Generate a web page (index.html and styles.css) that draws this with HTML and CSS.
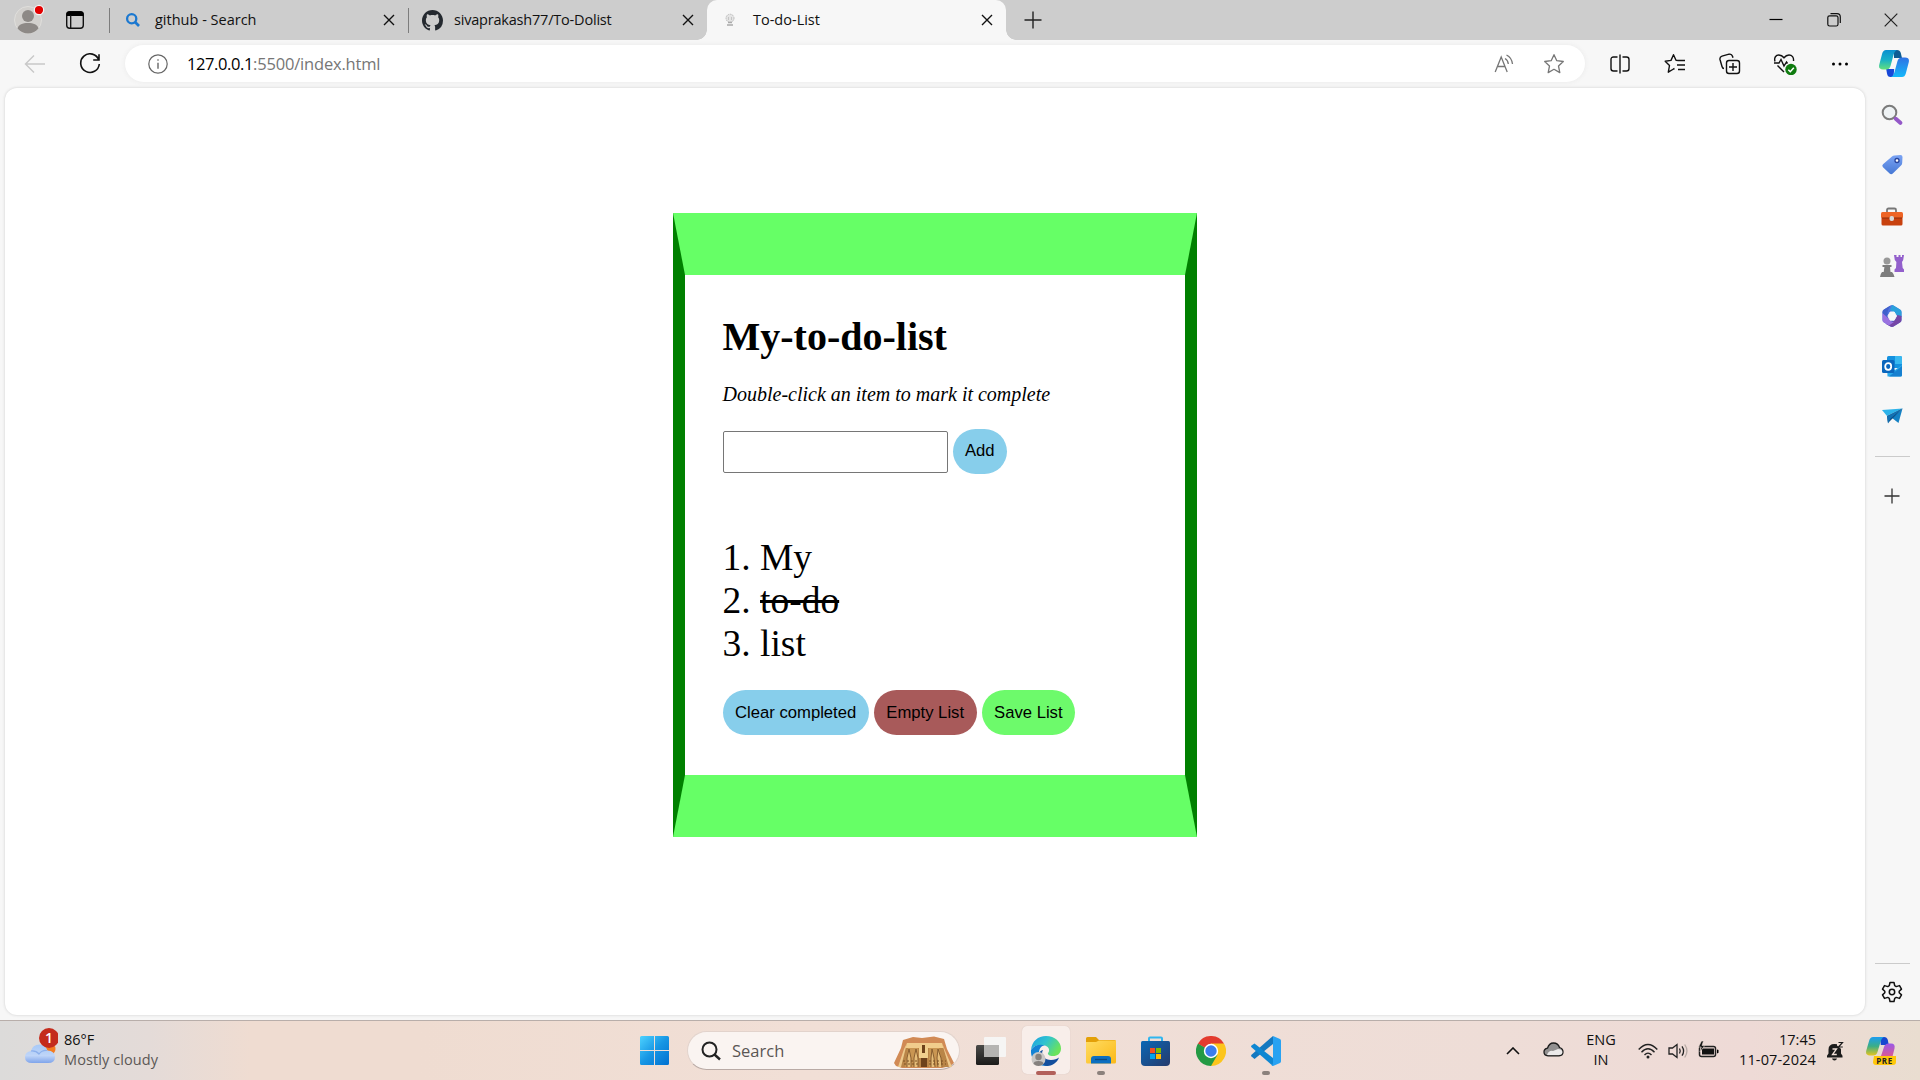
FILE: index.html
```html
<!DOCTYPE html>
<html lang="en">
<head>
<meta charset="utf-8">
<title>To-do-List</title>
<link rel="stylesheet" href="styles.css">
</head>
<body>
<header class="tabstrip">
  <div class="profile"><svg width="34" height="34" viewBox="0 0 34 34"><circle cx="17" cy="17" r="13.5" fill="#d2d0cd" stroke="#e0dfdc"/><circle cx="17" cy="13" r="6" fill="#8d8986"/><path d="M6.5 25.5c1-4 5-5.500 10.500-5.500s9.500 1.500 10.500 5.500c-3 3.500-6.500 5-10.500 5s-7.500-1.500-10.500-5z" fill="#8d8986"/><circle cx="28" cy="7" r="4.700" fill="#e30000" stroke="#f3f3f3" stroke-width="1.200"/></svg></div>
  <div class="workspaces"><svg width="20" height="20" viewBox="0 0 20 20"><rect x="1.700" y="1.700" width="16.600" height="16.600" rx="3" fill="none" stroke="#111" stroke-width="1.400"/><path d="M1.500 6V4q0-2.500 2.500-2.500h12q2.500 0 2.500 2.500v2z" fill="#000"/><path d="M5.700 5v13" stroke="#111" stroke-width="1.300"/></svg></div>
  <div class="tab tab-first">
    <span class="favicon"><svg width="16" height="16" viewBox="0 0 16 16" fill="none" stroke="#1b78d0" stroke-width="2.300"><circle cx="6.700" cy="6.700" r="4.600"/><path d="M10 10l4 4" stroke-width="2.600"/></svg></span>
    <span class="title">github - Search</span>
    <svg class="close" width="12" height="12" viewBox="0 0 12 12"><path d="M1 1l10 10M11 1L1 11" stroke="#111" stroke-width="1.400"/></svg>
  </div>
  <div class="tab tab-second">
    <span class="favicon"><svg width="21" height="21" viewBox="0 0 16 16"><path fill="#24292f" d="M8 0C3.580 0 0 3.580 0 8c0 3.540 2.290 6.530 5.470 7.590.4.070.55-.17.55-.38 0-.19-.01-.82-.01-1.490-2.010.37-2.530-.49-2.690-.94-.09-.23-.48-.94-.82-1.130-.28-.15-.68-.52-.01-.53.63-.01 1.080.58 1.230.82.72 1.210 1.870.87 2.330.66.070-.52.28-.87.51-1.070-1.780-.2-3.640-.89-3.640-3.950 0-.87.31-1.590.82-2.150-.08-.2-.36-1.020.080-2.120 0 0 .67-.21 2.200.82.64-.18 1.320-.27 2-.27s1.360.090 2 .27c1.530-1.040 2.200-.82 2.200-.82.44 1.100.16 1.920.080 2.120.51.56.82 1.270.82 2.150 0 3.070-1.870 3.750-3.650 3.950.29.25.54.73.54 1.480 0 1.070-.01 1.930-.01 2.200 0 .21.15.46.55.38A8.010 8.010 0 0016 8c0-4.420-3.580-8-8-8z"/></svg></span>
    <span class="title">sivaprakash77/To-Dolist</span>
    <svg class="close" width="12" height="12" viewBox="0 0 12 12"><path d="M1 1l10 10M11 1L1 11" stroke="#111" stroke-width="1.400"/></svg>
  </div>
  <div class="tab tab-active">
    <span class="favicon"><svg width="12" height="14" viewBox="0 0 12 14"><circle cx="6" cy="5.200" r="4" fill="#e4e4e4" stroke="#bdbdbd" stroke-dasharray="1.500 .8"/><path d="M4 9.500h4M3 12h6" stroke="#aaa" stroke-width="1.300"/><path d="M4.500 4v3M7.500 4v3" stroke="#c4c4c4"/></svg></span>
    <span class="title">To-do-List</span>
    <svg class="close" width="12" height="12" viewBox="0 0 12 12"><path d="M1 1l10 10M11 1L1 11" stroke="#111" stroke-width="1.400"/></svg>
  </div>
  <div class="newtab"><svg width="18" height="18" viewBox="0 0 18 18"><path d="M9 .5v17M.5 9h17" stroke="#222" stroke-width="1.400"/></svg></div>
  <div class="winctl">
    <span><svg width="14" height="14" viewBox="0 0 14 14"><path d="M.5 6.500h13" stroke="#000" stroke-width="1.200"/></svg></span>
    <span><svg width="14" height="14" viewBox="0 0 14 14" fill="none" stroke="#111" stroke-width="1.200"><rect x=".8" y="2.800" width="10.200" height="10.200" rx="1.800"/><path d="M3.500 .7h6.500q3.300 0 3.300 3.300v6"/></svg></span>
    <span><svg width="14" height="14" viewBox="0 0 14 14"><path d="M.7 .7l12.600 12.600M13.300 .7L.7 13.300" stroke="#222" stroke-width="1.200"/></svg></span>
  </div>
</header>

<nav class="toolbar">
  <span class="tool"><svg width="22" height="20" viewBox="0 0 22 20" fill="none" stroke="#c9c9c9" stroke-width="1.500"><path d="M21 10H2M10 1.500L1.500 10l8.500 8.500"/></svg></span>
  <span class="tool"><svg width="22" height="22" viewBox="0 0 22 22" fill="none" stroke="#111" stroke-width="1.600"><path d="M19.800 7A9.300 9.300 0 1 0 20.300 11M20 1.200V7h-5.800"/></svg></span>
  <div class="address">
    <span class="info"><svg width="20" height="20" viewBox="0 0 20 20" fill="none" stroke="#666" stroke-width="1.200"><circle cx="10" cy="10" r="9.200"/><path d="M10 8.700v6" stroke-width="1.400"/><circle cx="10" cy="6" r=".5" stroke-width=".8"/></svg></span>
    <span class="url"><b>127.0.0.1</b>:5500/index.html</span>
    <span class="addr-icon"><svg width="20" height="20" viewBox="0 0 20 20" fill="none" stroke="#767676" stroke-width="1.300"><path d="M1.200 18L7.200 3l6 15M3.300 12.500h7.800M11 4.500q3 1.700 3.300 5.500M12.500 1q5.200 2.500 6 9"/></svg></span>
    <span class="addr-icon"><svg width="22" height="22" viewBox="0 0 22 22" fill="none" stroke="#767676" stroke-width="1.300" stroke-linejoin="round"><path d="M11 1.700l2.800 6 6.500.8-4.800 4.500 1.300 6.600-5.800-3.300-5.800 3.300 1.300-6.600L1.700 8.500l6.500-.8z"/></svg></span>
  </div>
  <div class="actions">
    <span class="tool"><svg width="20" height="20" viewBox="0 0 20 20" fill="none" stroke="#111" stroke-width="1.400"><path d="M7.500 3H3.500Q1 3 1 5.500v9Q1 17 3.500 17h4M12.500 3h4Q19 3 19 5.500v9q0 2.500-2.500 2.500h-4M10 .5v19"/></svg></span>
    <span class="tool"><svg width="22" height="22" viewBox="0 0 22 22" fill="none" stroke="#111" stroke-width="1.400" stroke-linejoin="round"><path d="M14.500 7.500l-2.500-.3-2.500-5.500-2.500 5.700-5.800.8 4.300 4.300-1.200 6.700L9.500 16l1-.5M14 7.500h7M13 12h8M14 16.500h7"/></svg></span>
    <span class="tool"><svg width="22" height="22" viewBox="0 0 22 22" fill="none" stroke="#111" stroke-width="1.400"><rect x="7.500" y="7.500" width="13" height="13" rx="2.500"/><path d="M14 10v8M10 14h8M5 15.500q-1.500 0-2-2L1 6.500Q.5 4 3 3.200l7-2q2.700-.6 3.500 2l.5 1.600"/></svg></span>
    <span class="tool"><svg width="24" height="22" viewBox="0 0 24 22" fill="none" stroke="#111" stroke-width="1.400"><path d="M2 8.500C.8 4.500 3 2 5.800 2 8.500 2 10 3.500 11 4.800 12 3.500 13.500 2 16 2c3 0 5 2.500 4.500 6M1 10h5l2-3.500 3 6.500 2.500-4 1 1.500M4.500 12.500L11 19"/><circle cx="18" cy="16.500" r="5.700" fill="#0f7b0f" stroke="none"/><path d="M15.300 16.700l2 2 3.500-4" stroke="#fff" stroke-width="1.500"/></svg></span>
    <span class="tool"><svg width="18" height="6" viewBox="0 0 18 6"><circle cx="2.500" cy="3" r="1.500"/><circle cx="9" cy="3" r="1.500"/><circle cx="15.500" cy="3" r="1.500"/></svg></span>
    <span class="tool"><svg width="30" height="27" viewBox="0 0 30 27">
      <defs><linearGradient id="cpA" x1="0" y1="0" x2="0" y2="1"><stop offset="0" stop-color="#0a8fd0"/><stop offset=".5" stop-color="#18b0c8"/><stop offset="1" stop-color="#62e07c"/></linearGradient><linearGradient id="cpB" x1="0" y1="0" x2="0" y2="1"><stop offset="0" stop-color="#2f72e4"/><stop offset="1" stop-color="#14b8fa"/></linearGradient></defs>
      <path d="M15 0h3q3 0 3.800 3l1.200 5h-8z" fill="#0d5c94"/><path d="M14.500 27h-3q-3 0-3.500-3.500l-.8-4.500h8z" fill="#1747d8"/>
      <path d="M7 0h11q-2.500 1-3.500 5l-3 11q-1 3.500-4.500 3.500H4q-5 0-3.700-5L3.200 3.500Q4.200 0 7 0z" fill="url(#cpA)"/><path d="M23 27H12q2.500-1 3.500-5l3-11q1-3.500 4.500-3.500h3q5 0 3.700 5l-2.900 11Q25.800 27 23 27z" fill="url(#cpB)"/></svg></span>
  </div>
</nav>

<div class="main">
  <main class="page">
    <section class="card">
      <h1>My-to-do-list</h1>
      <p class="hint"><i>Double-click an item to mark it complete</i></p>
      <div class="entry"><input type="text" class="field"><button class="btn blue">Add</button></div>
      <ol class="items"><li>My</li><li class="done">to-do</li><li>list</li></ol>
      <div class="buttons"><button class="btn blue">Clear completed</button><button class="btn red">Empty List</button><button class="btn green">Save List</button></div>
    </section>
  </main>
  <aside class="sidebar">
    <span class="side"><svg width="22" height="22" viewBox="0 0 22 22" fill="none"><circle cx="8.500" cy="8.500" r="6.800" fill="#eef2f4" stroke="#7b7b7b" stroke-width="2"/><path d="M14.800 14.800l4.500 4" stroke="#9458c8" stroke-width="4" stroke-linecap="round"/></svg></span>
    <span class="side"><svg width="22" height="22" viewBox="0 0 22 22"><defs><linearGradient id="tag" x1="0" y1="0" x2="0" y2="1"><stop offset="0" stop-color="#7ba4f4"/><stop offset="1" stop-color="#4577d4"/></linearGradient></defs><path d="M11 2.500Q12 1.500 13.500 1.400L19.500 1q2 0 2 2l-.3 6q-.1 1.500-1.200 2.600l-8.200 8q-1.600 1.500-3.200 0L2 13.200q-1.500-1.500 0-3z" fill="url(#tag)"/><circle cx="16" cy="6.500" r="2" fill="#fff" stroke="#27449c" stroke-width="1.300"/></svg></span>
    <span class="side side-tools"><svg width="24" height="20" viewBox="0 0 24 20"><path d="M7 6V3q0-1.500 1.500-1.500h6Q16 1.500 16 3v3" fill="none" stroke="#777" stroke-width="1.800"/><rect x="1.500" y="9" width="21" height="9.500" rx="1.500" fill="#c8410e"/><rect x="1" y="5" width="22" height="6" rx="1.500" fill="#ee6425"/><path d="M2 11h20" stroke="#8f2d0a"/><rect x="9.500" y="9" width="4.500" height="5" rx="2" fill="#d8d8d8"/></svg></span>
    <span class="side"><svg width="24" height="24" viewBox="0 0 24 24"><path d="M14 1h2.500v2h2V1h2v2h1.500V1H24l-.8 5-1.200 2 .7 6 1.300 1.500V18h-9.500v-2.500L16 14l.4-6-1.600-2z" fill="#9360cc"/><circle cx="7" cy="7" r="3.500" fill="#999"/><path d="M2.500 11h9v2H10l.5 5h1.500q2 2 2.500 5H0q.3-3 2-5h1.700l.7-5H2.500z" fill="#7d7d7d"/></svg></span>
    <span class="side"><svg width="22" height="24" viewBox="0 0 22 24"><path d="M9.500 1.500q1.500-.8 3 0l6.500 3.900q1.500.8 1.500 2.600v8q0 1.800-1.500 2.600l-6.500 3.900q-1.500.8-3 0L3 18.600Q1.500 17.800 1.500 16V8Q1.500 6.200 3 5.400z" fill="#4f74de"/><path d="M11 1q.8 0 1.500.5l6.500 3.900q1.500.8 1.500 2.600v5L15 10.500 9 6z" fill="#2ba0dc"/><path d="M20.500 12v4q0 1.800-1.500 2.600l-6.500 3.900q-1.500.8-3 0L5 20l8-3 3.500-6z" fill="#7546a6"/><path d="M1.500 16V9L7 13l4 5 2 0-5 3.600-5-3Q1.500 17.800 1.500 16z" fill="#9a72e0"/><path d="M3 5.400l6.500-3.900Q7 5 6.500 8.500L7 14 1.500 9V8Q1.500 6.200 3 5.400z" fill="#4060cc"/><path d="M9.200 8h4l2.300 4-2.300 4.200h-4L6.900 12z" fill="#f7f7f7" stroke="#f7f7f7" stroke-linejoin="round"/></svg></span>
    <span class="side"><svg width="22" height="22" viewBox="0 0 22 22"><rect x="6" y="1" width="15" height="12" rx="1.500" fill="#1491df"/><path d="M14 1h5.500Q21 1 21 2.500V9h-7z" fill="#38b8f0"/><path d="M6 10l8 5 7-5v10q0 1.500-1.500 1.500h-13z" fill="#29a9ea"/><path d="M21 11v9q0 1.500-1.500 1.500H8z" fill="#1680d0"/><rect x="1" y="5" width="12.500" height="13" rx="1.500" fill="#0a66bd"/><ellipse cx="7.200" cy="11.500" rx="3" ry="3.300" fill="none" stroke="#fff" stroke-width="1.800"/></svg></span>
    <span class="side"><svg width="22" height="20" viewBox="0 0 22 20"><path d="M1 4l20.500-1.500L6 10z" fill="#2db3ea"/><path d="M21.500 2.500L17.500 17l-6.500-5z" fill="#1481c4"/><path d="M6 10L21.500 2.500 7 17z" fill="#0b4f88"/><path d="M21.500 2.500L9.500 12.500 7 17.500l-1-7z" fill="#1272b4"/></svg></span>
    <hr class="rule">
    <span class="side side-add"><svg width="16" height="16" viewBox="0 0 16 16"><path d="M8 .5v15M.5 8h15" stroke="#333" stroke-width="1.300"/></svg></span>
    <div class="side-bottom"><hr class="rule"><span class="side side-gear"><svg width="22" height="22" viewBox="0 0 22 22" fill="none" stroke="#111" stroke-width="1.500" stroke-linejoin="round"><path d="M9 1.500h4l.7 3.200 1.500.9 3.300-1 2 3.500-2.300 2.100v1.600l2.300 2.100-2 3.500-3.300-1-1.500.9-.7 3.200H9l-.7-3.200-1.500-.9-3.300 1-2-3.500 2.300-2.100v-1.600L1.500 8.100l2-3.500 3.300 1 1.500-.9z"/><circle cx="11" cy="11" r="2.700"/></svg></span></div>
  </aside>
</div>

<footer class="taskbar">
  <div class="weather">
    <svg width="34" height="38" viewBox="0 0 34 38"><defs><linearGradient id="cl" x1="0" y1="0" x2="0" y2="1"><stop offset="0" stop-color="#a7c9f7"/><stop offset=".6" stop-color="#bfd5f8"/><stop offset="1" stop-color="#7fa4ea"/></linearGradient></defs><circle cx="25" cy="22" r="6.500" fill="#f47b20"/><path d="M8 36q-7 0-7-6 0-5 6-6 1.500-6.500 8.500-6.500 6 0 8 6 7.500.5 7.500 6.500 0 6-7 6z" fill="url(#cl)"/><path d="M7 24q5-.5 8 3 3-4 8-3.500" fill="none" stroke="#8cb0ec" stroke-width="1.200"/><circle cx="25" cy="11" r="10" fill="#c42b1c"/><text x="25" y="16" text-anchor="middle" class="badge">1</text></svg>
    <div class="wtext"><span class="temp">86°F</span><span class="cond">Mostly cloudy</span></div>
  </div>
  <div class="apps">
    <span class="app"><svg width="29" height="29" viewBox="0 0 29 29"><defs><linearGradient id="win" x1="0" y1="0" x2="1" y2="1"><stop offset="0" stop-color="#4dd2ff"/><stop offset=".5" stop-color="#1796e4"/><stop offset="1" stop-color="#0070d0"/></linearGradient></defs><path fill="url(#win)" d="M1.500 0H14v14H0V1.500Q0 0 1.500 0zM15 0h12.500Q29 0 29 1.500V14H15zM0 15h14v14H1.500Q0 29 0 27.500zM15 15h14v12.500q0 1.500-1.500 1.500H15z"/></svg></span>
    <div class="search"><svg width="20" height="20" viewBox="0 0 20 20" fill="none" stroke="#222" stroke-width="2"><circle cx="8.500" cy="8.500" r="7"/><path d="M13.500 13.500l5.500 5" stroke-width="2.400"/></svg><span class="stext">Search</span>
      <svg class="temple" width="60" height="32" viewBox="0 0 60 32"><path d="M0 27L7 12 9 4l10-3 9 1 12-1.500L50 3l3 10 7 14-4 3-8 2H8L2 30z" fill="#d18a55"/><path d="M13 7h35l7 24H6z" fill="#b98547"/><path d="M13 7h35l1.500 5h-38z" fill="#f1cd8c"/><path d="M10 13l3-6L7 31H4zM48 7l7 24h3L50 12z" fill="#edca8c"/><path d="M14 12h10v19H11zM35 12h10l4 19H35z" fill="#c99652"/><path d="M25 12h9v10h-9z" fill="#f1d08d"/><path d="M28 9h3v8h-3zM27 22h6v9h-6z" fill="#6d421b"/><path d="M13 31V22l2-9 2 9v9M20 31V22l2-9 2 9v9M37 31V22l1-9 2 9 1 9M44 31l-1-9 1-9 3 9 1 9" fill="#e6bd78" stroke="#80562a" stroke-width=".9"/><path d="M9 25h16M35 25h17M10 28h15M35 28h17" stroke="#7a5023" stroke-dasharray="2 2"/></svg></div>
    <span class="app"><svg width="30" height="28" viewBox="0 0 30 28"><defs><linearGradient id="tvA" x1="0" y1="0" x2="0" y2="1"><stop offset="0" stop-color="#4a4a48"/><stop offset="1" stop-color="#1b1b1a"/></linearGradient></defs><rect y="8" width="23" height="20" rx="1.500" fill="url(#tvA)"/><rect x="8" y="0" width="22" height="20" rx="1" fill="#f5f5f5" opacity=".95"/><path d="M8 8h15v12H8z" fill="#b5b4b2"/></svg></span>
    <span class="app current"><svg width="32" height="32" viewBox="0 0 32 32"><defs><linearGradient id="eg" x1="0" y1="0" x2="1" y2=".5"><stop offset="0" stop-color="#1b9de2"/><stop offset=".5" stop-color="#2fc3d0"/><stop offset="1" stop-color="#6be35b"/></linearGradient></defs><path d="M1 15C2 6 8 1 16 1c9 0 15 6 15 12.500 0 5-3.500 7.500-8 7.500-4 0-5.500-1.500-5-3 2-2 1.500-6-3-7.500C9 9 3 11 1 15z" fill="url(#eg)"/><path d="M1 15c3-5 9-6.500 14-4.500-4 0-6 3.500-6 7C9 25 14 30 20 30c-2.500 1.200-6 1.200-9 .2C4 28 .5 22 1 15z" fill="#1382d4"/><path d="M13 15c-3 5 2 10 8 10 3.500 0 6-1 8-2.500C27 28 22 31 17 31c-6-1-9-5-8.500-11 .5-3 2.500-4.500 4.500-5z" fill="#134f9d"/><circle cx="8.500" cy="24" r="7" fill="#c9c7c5"/><circle cx="8.500" cy="22" r="3.200" fill="#85817e"/><path d="M3.500 29q0-3 5-3t5 3q-5 4-10 0z" fill="#85817e"/></svg><i class="ind wide"></i></span>
    <span class="app"><svg width="30" height="27" viewBox="0 0 30 27"><defs><linearGradient id="fo" x1="0" y1="0" x2="1" y2="1"><stop offset="0" stop-color="#ffdc62"/><stop offset="1" stop-color="#fbb917"/></linearGradient></defs><path d="M0 1.500Q0 0 1.500 0H10l3 3h15.500Q30 3 30 4.500V8H0z" fill="#e3a008"/><path d="M0 5h10l3-1.500h17V25q0 1.500-1.500 1.500h-27Q0 26.500 0 25z" fill="url(#fo)"/><path d="M5 26.500V22q0-3 3-3h14q3 0 3 3v4.500z" fill="#0d6fc0"/><path d="M9 22.500h12" stroke="#0b4a82" stroke-width="1.300"/></svg><i class="ind"></i></span>
    <span class="app"><svg width="29" height="30" viewBox="0 0 29 30"><defs><linearGradient id="st" x1="0" y1="0" x2="1" y2="1"><stop offset="0" stop-color="#0a67b5"/><stop offset="1" stop-color="#263a6c"/></linearGradient></defs><path d="M8 6V2.500Q8 1.500 9 1.500h11q1 0 1 1V6" fill="none" stroke="#2fb6ef" stroke-width="2"/><path d="M0 6.500Q0 5 1.500 5h26Q29 5 29 6.500V26q0 4-4 4H4q-4 0-4-4z" fill="url(#st)"/><path fill="#f25022" d="M9 12h5v5H9z"/><path fill="#7fba00" d="M15 12h5v5h-5z"/><path fill="#00a4ef" d="M9 18h5v5H9z"/><path fill="#ffb900" d="M15 18h5v5h-5z"/></svg></span>
    <span class="app"><svg width="30" height="30" viewBox="0 0 30 30"><path d="M15 15L2 7.500A15 15 0 0 1 28 7.500z" fill="#e33b2e"/><path d="M15 15V7.500h13A15 15 0 0 1 15 30z" fill="#fcc51c"/><path d="M15 15l6.500 3.700L15 30A15 15 0 0 1 2 7.500z" fill="#249a44"/><path d="M15 15L2 7.500 8 6.500h7z" fill="#e33b2e"/><circle cx="15" cy="15" r="7.200" fill="#fff"/><circle cx="15" cy="15" r="5.700" fill="#3b7ded"/></svg></span>
    <span class="app"><svg width="30" height="30" viewBox="0 0 30 30"><path d="M22 0v8L3.500 23 .5 20.500q-.8-1 0-1.800z" fill="#1378c0"/><path d="M22 30v-8L3.500 7.500.5 9.500q-.8 1 0 1.800z" fill="#0f87d2"/><path d="M22 0l7 3q1 .5 1 1.700v20.600q0 1.200-1 1.700l-7 3q-1 0-1.500-.8Q22 29 22 27z" fill="#28a2f2"/></svg><i class="ind"></i></span>
  </div>
  <div class="tray">
    <span class="tr tr-chev"><svg width="14" height="8" viewBox="0 0 14 8"><path d="M1 7l6-6 6 6" fill="none" stroke="#111" stroke-width="1.600"/></svg></span>
    <span class="tr tr-cloud"><svg width="21" height="15" viewBox="0 0 21 15"><path d="M5 13.800Q1 13.500 1 10q0-3 3.500-3.800Q6 1 10.500 1q4.500 0 6 4.500 3.500 1 3.500 4.500 0 3.500-4 3.800z" fill="#929090" stroke="#1c1c1c" stroke-width="1.300"/><path d="M4 13q2-5 6-4l5-2q4 0 4.400 3 0 3-3.500 3z" fill="#eceaea"/></svg></span>
    <div class="tr tr-lang"><span>ENG</span><span>IN</span></div>
    <span class="tr"><svg width="20" height="16" viewBox="0 0 20 16" fill="none" stroke="#222" stroke-width="1.400"><path d="M.7 6.500q9.300-10 18.600 0M3.500 9.300q6.500-7 13 0M6.500 12q3.500-3.800 7 0"/><circle cx="10" cy="14" r="1.500" fill="#222" stroke="none"/></svg></span>
    <span class="tr"><svg width="20" height="16" viewBox="0 0 20 16" fill="none" stroke="#222" stroke-width="1.300"><path d="M1 5h3.500L9 1.500v13L4.500 11H1z"/><path d="M11.500 5.500q1.500 2.500 0 5M14 3.300q3.200 4.700 0 9.400"/><path d="M16.700 1.500q4.500 6.500 0 13" stroke="#b5a9a4"/></svg></span>
    <span class="tr tr-batt"><svg width="21" height="17" viewBox="0 0 21 17"><rect x="1.500" y="5.500" width="16" height="10" rx="2" fill="none" stroke="#222" stroke-width="1.500"/><rect x="4" y="7.500" width="12" height="6" fill="#111"/><path d="M19 8.500v4l1.500-.7V9z"/><path d="M3.500 0L.5 6h2.700L2 11l4.700-6.500H4L5.500 0z" fill="#111" stroke="#f0dfd7" stroke-width=".6"/></svg></span>
    <div class="clock"><span class="time">17:45</span><span class="date">11-07-2024</span></div>
    <span class="tr tr-bell"><svg width="18" height="20" viewBox="0 0 18 20"><path d="M1 16.500v-1.800L2.500 12.500V8.500Q2.500 3 8.500 3q6.500 0 6.500 5.500v4l1.500 2.200v1.800zM6 17.500h5q-.5 2-2.500 2T6 17.500z" fill="#1b1b1b"/><path d="M6.500 8h4l-4 5.500h4.300" fill="none" stroke="#efdfd7" stroke-width="1.300"/><path d="M11 0h7v7.500h-3.500L11 4.500z" fill="#efdfd7"/><path d="M12.500 1.500h4L12.500 6h4.300" fill="none" stroke="#1b1b1b" stroke-width="1.200"/></svg></span>
    <span class="tr tr-pilot"><svg width="30" height="30" viewBox="0 0 30 30"><defs><linearGradient id="pA" x1="0" y1="0" x2="0" y2="1"><stop offset="0" stop-color="#1b9df0"/><stop offset=".5" stop-color="#3bae86"/><stop offset="1" stop-color="#e6c51e"/></linearGradient><linearGradient id="pB" x1="0" y1="0" x2="0" y2="1"><stop offset="0" stop-color="#9a59e8"/><stop offset="1" stop-color="#ec5a7c"/></linearGradient></defs><path d="M14 1h4q3 0 3.800 3l1 5h-8z" fill="#1747cf"/><path d="M7 1h11q-2.500 1-3.500 5l-3 10q-1 3.500-4.500 3.500H4q-5 0-3.700-5L3.200 4.500Q4.200 1 7 1z" fill="url(#pA)"/><path d="M25 24H10q4-1 5-4l3-9q1-3.500 4.500-3.500h2.500q4.500 0 3.500 5l-2 8Q26 24 25 24z" fill="url(#pB)"/><path d="M8 20h22v6q0 3-3 3H10q-3 0-3-3z" fill="#ffc80a"/><text x="18.500" y="27.500" text-anchor="middle" class="pre">PRE</text></svg></span>
  </div>
</footer>
</body>
</html>
```
FILE: styles.css
```css
* { box-sizing: border-box; }
html, body { margin: 0; height: 100%; overflow: hidden; }
body { display: flex; flex-direction: column; width: 1920px; height: 1080px; background: #f7f7f7; font-family: "Open Sans", "Noto Sans", sans-serif; color: #111; }
svg { display: block; flex: none; }

.tabstrip { display: flex; flex: none; height: 40px; background: #cdcdcd; }
.profile { width: 56px; display: flex; align-items: center; justify-content: center; }
.workspaces { width: 38px; display: flex; align-items: center; justify-content: center; }
.tab { display: flex; align-items: center; height: 40px; }
.favicon { width: 22px; display: flex; justify-content: center; }
.title { font-size: 14.5px; line-height: 20px; white-space: nowrap; margin: 0 auto 0 11px; }
.tab-first { width: 300px; margin-left: 14px; padding: 0 13px 0 14px; background: linear-gradient(#7d7d7d, #7d7d7d) 1px 8px / 1px 25px no-repeat; }
.tab-second { width: 299px; padding: 0 13px 0 13px; background: linear-gradient(#7d7d7d, #7d7d7d) 0 8px / 1px 25px no-repeat; }
.tab-second .title { letter-spacing: -.2px; }
.tab-active { width: 299px; padding: 0 13px 0 12px; background: #f7f7f7; border-radius: 10px 10px 0 0; position: relative; }
.tab-active .title { margin-left: 12px; }
.tab-active::before, .tab-active::after { content: ""; position: absolute; bottom: 0; width: 10px; height: 10px; }
.tab-active::before { left: -10px; background: radial-gradient(circle at 0 0, transparent 9.500px, #f7f7f7 10px); }
.tab-active::after { right: -10px; background: radial-gradient(circle at 100% 0, transparent 9.500px, #f7f7f7 10px); }
.newtab { width: 54px; display: flex; align-items: center; justify-content: center; }
.winctl { display: flex; margin-left: auto; }
.winctl span { width: 57.500px; display: flex; align-items: center; justify-content: center; }

.toolbar { display: flex; align-items: center; flex: none; height: 48px; padding: 0 0 1px 7.500px; }
.tool { width: 55px; display: flex; justify-content: center; }
.tool:last-child { width: 52.500px; }
.address { display: flex; align-items: center; width: 1460px; height: 37px; margin-left: 7.500px; padding-right: 6px; border-radius: 19px; background: #fff; box-shadow: 0 0 5px #e9e9e9; }
.info { width: 62px; padding-left: 22.500px; }
.url { font-size: 16.500px; letter-spacing: -.18px; color: #767676; margin-right: auto; white-space: nowrap; }
.url b { font-weight: 400; color: #000; letter-spacing: -.4px; }
.addr-icon { width: 50px; display: flex; justify-content: center; }
.actions { display: flex; align-items: center; margin-left: 7.500px; }

.main { display: flex; flex: none; height: 932px; padding-left: 5px; }
.page { width: 1860px; height: 927px; background: #fff; border-radius: 12px; box-shadow: 0 0 3px #ccc; padding: 125px 0 0 668px; }
.card { width: 524px; height: 624px; border-style: solid; border-width: 62px 12px; border-color: #66ff66 green; padding: 39px 37.500px 0; font-family: "Liberation Serif", serif; color: #000; }
.card h1 { margin: 0; font-size: 40px; line-height: 46px; }
.hint { margin: 23px 0 23px; font-size: 20px; line-height: 23px; }
.entry { display: flex; align-items: center; gap: 5px; height: 45px; }
.field { width: 225px; height: 42px; border: 1px solid #767676; border-radius: 2px; background: #fff; outline: none; }
.btn { height: 45px; padding: 0 12.500px; border: 0; border-radius: 25px; font: 16.670px "Liberation Sans", sans-serif; color: #000; white-space: nowrap; }
.entry .btn { padding-bottom: 2px; }
.blue { background: #87ceeb; }
.red { background: #a85a5a; }
.green { background: #6dfa6b; }
.items { margin: 62px 0 25px; padding: 0 0 0 37.500px; font-size: 37.500px; line-height: 43px; }
.done { text-decoration: line-through; }
.buttons { display: flex; gap: 5px; }

.sidebar { width: 55px; display: flex; flex-direction: column; align-items: center; padding-top: 2px; }
.side { height: 50.200px; width: 54px; display: flex; align-items: center; justify-content: center; padding-right: 1px; }
.side-tools { padding-top: 3px; }
.rule { width: 35px; height: 1px; margin: 15px 0 0; border: 0; background: #cbcbcb; }
.side-add { height: 77px; }
.side-bottom { margin-top: auto; display: flex; flex-direction: column; align-items: center; }
.side-gear { height: 56px; }

.taskbar { position: relative; display: flex; align-items: center; flex: none; height: 60px; border-top: 1px solid #b8aeaa; background: linear-gradient(90deg, #dcdbda 0, #e4dbd8 150px, #efdcd1 250px, #efdcd1 420px, #f1dfd6 800px, #eeddd7 1500px, #eedad6 1750px, #e9ddd0 1920px); }
.weather { display: flex; align-items: center; gap: 6px; width: 627px; padding-left: 24px; }
.weather svg { width: 34px; height: 38px; margin-bottom: 9px; }
.badge { font: 600 14px "Open Sans", sans-serif; fill: #fff; }
.wtext { display: flex; flex-direction: column; font-size: 14.500px; line-height: 20px; padding-bottom: 2px; }
.cond { color: #5c5856; letter-spacing: .1px; }
.apps { display: flex; align-items: center; }
.app { position: relative; width: 55px; height: 59px; display: flex; align-items: center; justify-content: center; padding-right: 1px; }
.search { display: flex; align-items: center; width: 273px; height: 39px; margin: 0 3.500px 0 5px; padding: 0 5px 0 13px; border-radius: 20px; background: #faf4f1; border: 1px solid #e2d3cc; border-bottom-color: #b9aaa5; }
.stext { margin: 0 auto 0 11px; font-size: 16.500px; color: #5b5654; }
.temple { margin-top: 2px; }
.current::before { content: ""; position: absolute; left: 3.500px; top: 5px; width: 48px; height: 48px; border-radius: 5px; background: #f8eeea; box-shadow: 0 0 1px #c9b9b2; }
.current svg { position: relative; }
.ind { position: absolute; left: 23.500px; bottom: 5px; width: 8px; height: 4px; border-radius: 2px; background: #8b817c; }
.wide { left: 17.500px; width: 20px; background: #b2605a; }
.tray { display: flex; align-items: center; margin-left: auto; padding-right: 12px; }
.tr { width: 30px; display: flex; align-items: center; justify-content: center; }
.tr-chev, .tr-cloud { width: 40px; }
.tr-cloud { padding-bottom: 2px; }
.tr-batt { padding-bottom: 3px; }
.tr-lang { width: 56px; margin-right: 4px; padding-bottom: 1px; flex-direction: column; font-size: 14.500px; line-height: 20px; }
.clock { width: 93px; padding-bottom: 2px; display: flex; flex-direction: column; align-items: flex-end; font-size: 14.500px; line-height: 20px; }
.date { letter-spacing: .13px; }
.tr-bell { width: 38px; }
.tr-pilot { width: 54px; }
.pre { font: 700 8px "Open Sans", sans-serif; fill: #222; letter-spacing: .5px; }
```
